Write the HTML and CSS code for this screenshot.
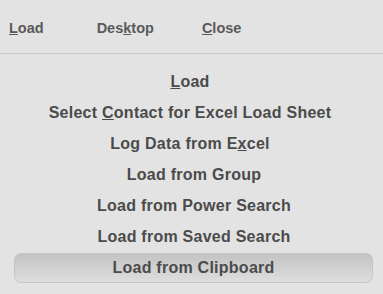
FILE: index.html
```html
<!DOCTYPE html>
<html>
<head>
<meta charset="utf-8">
<link rel="stylesheet" href="styles.css">
</head>
<body>
<div class="menubar">
  <span class="top top-load"><u>L</u>oad</span>
  <span class="top top-desktop">Des<u>k</u>top</span>
  <span class="top top-close"><u>C</u>lose</span>
</div>
<div class="list">
  <div class="item item-mn"><u>L</u>oad</div>
  <div class="item item-mn">Select <u>C</u>ontact for Excel Load Sheet</div>
  <div class="item item-mn">Log Data from E<u>x</u>cel</div>
  <div class="item">Load from Group</div>
  <div class="item">Load from Power Search</div>
  <div class="item">Load from Saved Search</div>
  <div class="item item-active">Load from Clipboard</div>
</div>
</body>
</html>
```
FILE: styles.css
```css
html, body {
  margin: 0;
  padding: 0;
  background: #e3e3e3;
  width: 383px;
  height: 294px;
  overflow: hidden;
  font-family: "Liberation Sans", Arial, sans-serif;
  font-weight: bold;
  color: #4b4b4b;
}
.menubar {
  height: 51px;
  padding-top: 2px;
  border-bottom: 1px solid #cbcbcb;
  display: flex;
  align-items: center;
  padding-left: 9px;
  font-size: 14.5px;
  color: #5a5a5a;
}
.top-desktop { margin-left: 53px; }
.top-close { margin-left: 48px; }
.list {
  padding-top: 12px;
  font-size: 16px;
  letter-spacing: 0.25px;
}
.item {
  height: 31px;
  line-height: 31px;
  text-align: center;
  padding-left: 5px;
}
.item-mn {
  padding-left: 0;
  padding-right: 3px;
}
.item-active {
  margin: 1px 10px 0 14px;
  height: 28px;
  line-height: 28px;
  border: 1px solid #c6c6c6;
  border-radius: 7px;
  background: linear-gradient(#c3c3c3, #dedede);
  padding-left: 0;
}
```
